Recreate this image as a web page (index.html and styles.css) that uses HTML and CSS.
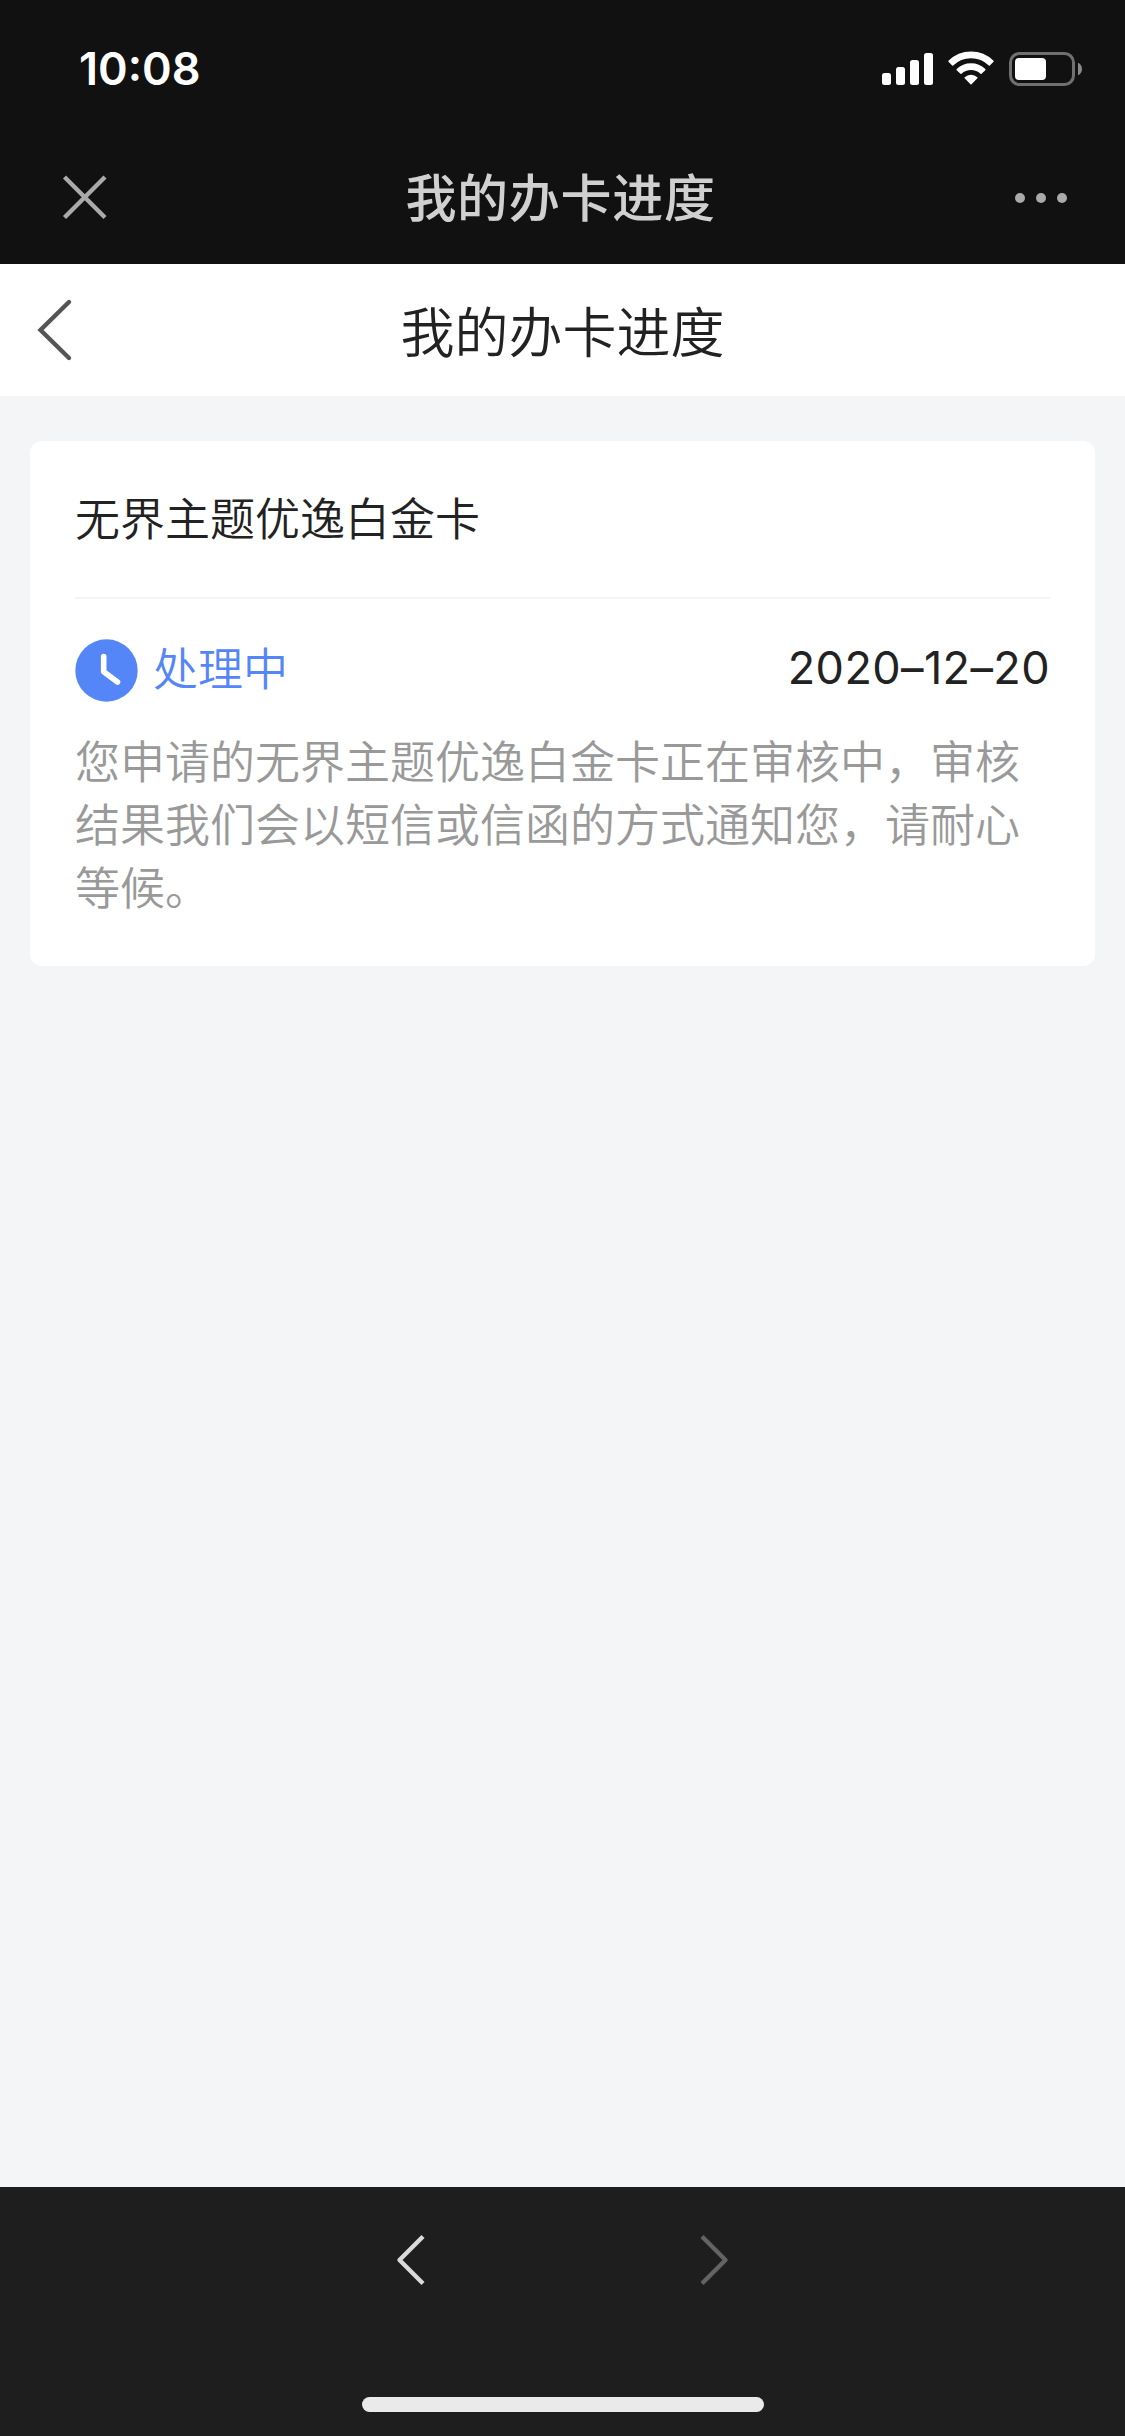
FILE: index.html
```html
<!DOCTYPE html>
<html lang="zh-CN">

<head>
    <meta charset="UTF-8">
    <meta name="viewport" content="width=device-width, initial-scale=1.0">
    <title>我的办卡进度</title>
    <link rel="stylesheet" href="styles.css">
</head>

<body>
    <!-- Status bar -->
    <div class="status-bar">
        <span class="time">10:08</span>
        <svg class="status-icons" width="202" height="36" viewBox="0 0 202 36">
            <!-- signal -->
            <g fill="#fff">
                <rect x="0" y="22" width="9" height="12" rx="2.5" />
                <rect x="14" y="16" width="9" height="18" rx="2.5" />
                <rect x="28" y="9" width="9" height="25" rx="2.5" />
                <rect x="42" y="2" width="9" height="32" rx="2.5" />
            </g>
            <!-- wifi -->
            <g fill="#fff" stroke="#fff" stroke-width="1.5" stroke-linejoin="round">
                <path d="M67 10.3A31.5 31.5 0 0 1 111 10.3L107.3 13.9A26.3 26.3 0 0 0 70.7 13.9Z" />
                <path d="M75.2 18.6A20 20 0 0 1 102.8 18.6L99 22.3A14.6 14.6 0 0 0 79 22.3Z" />
                <path d="M83.2 26.7A8.4 8.4 0 0 1 94.8 26.7L89 32.6Z" />
            </g>
            <!-- battery -->
            <rect x="128.5" y="2.5" width="63" height="31" rx="9" fill="none" stroke="#707070" stroke-width="3" />
            <rect x="133" y="7" width="31" height="22" rx="4" fill="#fff" />
            <path d="M196 11.7C201.3 13.5 201.3 22.5 196 24.3Z" fill="#8a8a8a" />
        </svg>
    </div>

    <!-- App title bar -->
    <div class="app-bar">
        <svg class="close" width="42" height="42" viewBox="0 0 42 42">
            <path d="M0.5 1L41 41.5M41 1L0.5 41.5" stroke="#aaa" stroke-width="4.4" />
        </svg>
        <div class="app-title">我的办卡进度</div>
        <div class="more"><i></i><i></i><i></i></div>
    </div>

    <header>
        <svg class="back" width="36" height="64" viewBox="0 0 36 64">
            <path d="M32 4L3.5 32L32 60" fill="none" stroke="#555" stroke-width="4.4" stroke-linecap="round" />
        </svg>
        <h1>我的办卡进度</h1>
    </header>

    <main>
        <div class="card">
            <h2>无界主题优逸白金卡</h2>
            <div class="status">
                <svg width="63" height="63" viewBox="0 0 63 63">
                    <circle cx="31.5" cy="31.5" r="31.2" fill="#5586f8" />
                    <path d="M28.7 17.5V32.8L42.5 43" fill="none" stroke="#fff" stroke-width="5.6" stroke-linecap="round" stroke-linejoin="round" />
                </svg>
                <span class="state">处理中</span>
                <span class="date">2020–12–20</span>
            </div>
            <p class="message">您申请的无界主题优逸白金卡正在审核中，审核结果我们会以短信或信函的方式通知您，请耐心等候。</p>
        </div>
    </main>

    <!-- Browser navigation -->
    <footer>
        <div class="nav-buttons">
            <svg width="30" height="54" viewBox="0 0 30 54">
                <path d="M27 3.5L3.5 27L27 50.5" fill="none" stroke="#dadada" stroke-width="4.4" stroke-linejoin="round" />
            </svg>
            <svg width="30" height="54" viewBox="0 0 30 54">
                <path d="M3 3.5L26.5 27L3 50.5" fill="none" stroke="#636363" stroke-width="4.4" stroke-linejoin="round" />
            </svg>
        </div>
        <div class="home-bar"></div>
    </footer>
</body>

</html>
```

FILE: styles.css
```css
* {
    box-sizing: border-box;
    margin: 0;
    padding: 0;
}

body {
    width: 1125px;
    height: 2436px;
    display: flex;
    flex-direction: column;
    background-color: #f3f5f7;
    font-family: "Noto Sans CJK SC", sans-serif;
    font-weight: 350;
    color: #222;
    overflow: hidden;
}

.status-bar {
    height: 132px;
    padding: 51px 41px 0 79px;
    display: flex;
    justify-content: space-between;
    align-items: flex-start;
    background-color: #111;
}

.time {
    font-family: Inter, sans-serif;
    font-size: 45px;
    font-weight: 600;
    line-height: 36px;
    color: #fff;
}

.app-bar {
    height: 132px;
    padding: 0 58px 0 64px;
    display: grid;
    grid-template-columns: 42px 1fr 52px;
    align-items: center;
    background-color: #111;
}

.close {
    margin-bottom: 2px;
    overflow: visible;
}

.app-title {
    height: 132px;
    text-align: center;
    font-size: 51px;
    font-weight: 500;
    letter-spacing: 0.7px;
    line-height: 127px;
    color: #d0d0d0;
}

.more {
    display: flex;
    justify-content: space-between;
}

.more i {
    width: 10px;
    height: 10px;
    border-radius: 50%;
    background-color: #aaa;
}

header {
    height: 132px;
    padding: 0 37px;
    display: grid;
    grid-template-columns: 36px 1fr 36px;
    align-items: center;
    background-color: #fff;
}

h1 {
    text-align: center;
    font-size: 54px;
    font-weight: 350;
    line-height: 132px;
}

main {
    flex: 1;
    padding: 45px 30px;
}

.card {
    height: 525px;
    padding: 0 45px;
    background-color: #fff;
    border-radius: 12px;
}

h2 {
    height: 158px;
    border-bottom: 2px solid #f3f4f9;
    font-size: 45px;
    font-weight: 350;
    line-height: 151px;
}

.status {
    height: 63px;
    margin: 40px 0 26px;
    display: flex;
    align-items: center;
    font-size: 45px;
    line-height: 57px;
}

.state {
    height: 63px;
    margin-left: 15px;
    line-height: 55px;
    color: #5586f8;
}

.date {
    height: 63px;
    margin-left: auto;
    font-family: Inter, sans-serif;
    font-weight: 400;
    letter-spacing: 0.4px;
}

.message {
    font-size: 45px;
    line-height: 63px;
    color: #999;
}

footer {
    height: 249px;
    padding: 46px 0 24px;
    display: flex;
    flex-direction: column;
    justify-content: space-between;
    align-items: center;
    background-color: #1e1e1e;
}

.nav-buttons {
    width: 333px;
    display: flex;
    justify-content: space-between;
}

.home-bar {
    width: 402px;
    height: 15px;
    border-radius: 8px;
    background-color: #eaeaea;
}
```
